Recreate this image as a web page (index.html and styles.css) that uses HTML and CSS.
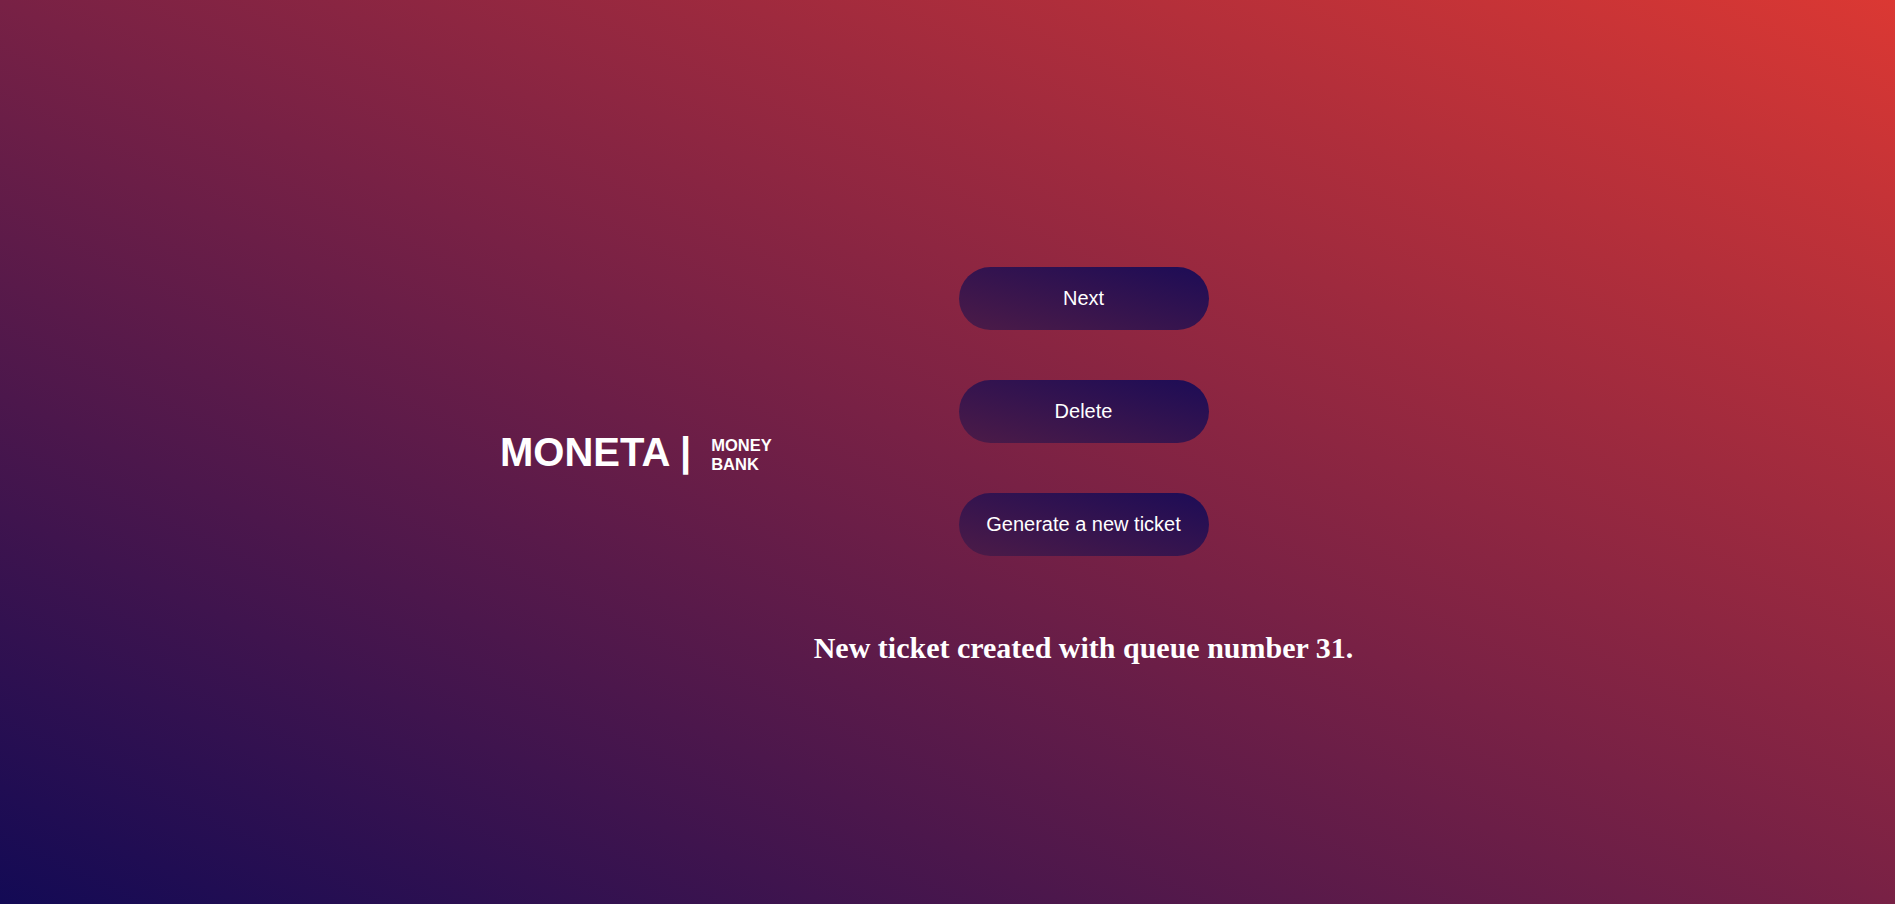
FILE: index.html
```html
<!DOCTYPE html>
<html lang="en">
<head>
<meta charset="utf-8">
<title>Moneta Money Bank – Queue</title>
<link rel="stylesheet" href="styles.css">
</head>
<body>
  <main class="layout">
    <div class="brand">
      <span class="brand-name">MONETA |</span>
      <span class="brand-sub">MONEY<br>BANK</span>
    </div>
    <section class="panel">
      <div class="actions">
        <button class="btn" type="button">Next</button>
        <button class="btn" type="button">Delete</button>
        <button class="btn" type="button">Generate a new ticket</button>
      </div>
      <h1 class="message">New ticket created with queue number 31.</h1>
    </section>
  </main>
</body>
</html>
```

FILE: styles.css
```css
html, body {
  margin: 0;
  padding: 0;
}

body {
  width: 100%;
  min-height: 100vh;
  background: linear-gradient(to top right, #130a55 0%, #782145 50%, #db3833 100%);
  color: #fff;
  font-family: "Liberation Sans", Arial, sans-serif;
  overflow: hidden;
}

.layout {
  display: flex;
  align-items: flex-start;
  padding: 267px 0 0 500px;
  gap: 43px;
}

.brand {
  display: flex;
  align-items: flex-start;
  margin-top: 163px;
  width: 270px;
}

.brand-name {
  font-family: "Liberation Sans", Arial, sans-serif;
  font-weight: 700;
  font-size: 40px;
  line-height: 44px;
  white-space: nowrap;
}

.brand-sub {
  margin-left: 20px;
  margin-top: 6px;
  font-weight: 700;
  font-size: 16.5px;
  line-height: 19px;
}

.panel {
  display: flex;
  flex-direction: column;
  align-items: center;
  width: 541px;
}

.actions {
  display: flex;
  flex-direction: column;
  gap: 50px;
}

.btn {
  width: 250px;
  height: 63px;
  border: none;
  border-radius: 32px;
  background: linear-gradient(to top right, #4c1b47 0%, #1d0c56 100%);
  color: #fff;
  font-family: "Liberation Sans", Arial, sans-serif;
  font-size: 20px;
  cursor: pointer;
  padding: 0;
}

.message {
  margin: 75px 0 0;
  font-family: "Liberation Serif", "Times New Roman", serif;
  font-weight: 700;
  font-size: 30px;
  line-height: 34px;
  white-space: nowrap;
}
```
